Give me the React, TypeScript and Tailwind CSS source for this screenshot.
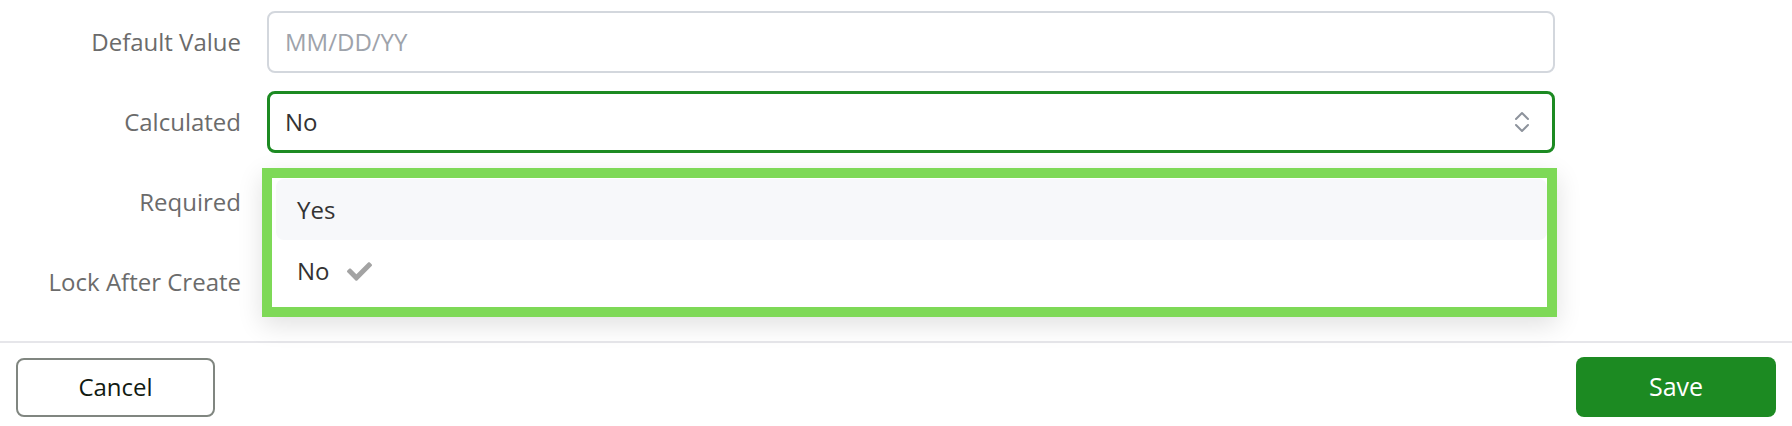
import { FaCheck } from 'react-icons/fa';

function FieldRow({ label, children }: { label: string; children?: React.ReactNode }) {
    return (
        <div className="grid grid-cols-[241px_1288px] gap-x-[26px] items-center h-[62px]">
            <span className="text-right text-[24px] text-[#6b6b6b] leading-none">{label}</span>
            <div>{children}</div>
        </div>
    );
}

function UpDown() {
    return (
        <svg width="16" height="24" viewBox="0 0 16 24" fill="none" stroke="#8d939c" strokeWidth="2" strokeLinecap="round" strokeLinejoin="round">
            <path d="M2 9 L8 3 L14 9" />
            <path d="M2 15 L8 21 L14 15" />
        </svg>
    );
}

export default function App() {
    return (
        <div className="relative w-[1792px] h-[426px] bg-white font-['Open_Sans',sans-serif] overflow-hidden">
            <div className="flex flex-col gap-[18px] pt-[11px]">
                <FieldRow label="Default Value">
                    <div className="h-[62px] rounded-[8px] border-2 border-[#d3d7dd] flex items-center px-[16px]">
                        <span className="text-[24px] text-[#9ea3ab]">MM/DD/YY</span>
                    </div>
                </FieldRow>
                <FieldRow label="Calculated">
                    <div className="h-[62px] rounded-[8px] border-[3px] border-[#1c8a22] flex items-center justify-between pl-[15px] pr-[22px]">
                        <span className="text-[24px] text-[#333333]">No</span>
                        <UpDown />
                    </div>
                </FieldRow>
                <FieldRow label="Required" />
                <FieldRow label="Lock After Create" />
            </div>

            <div className="mt-[28px] border-t-2 border-[#e6e6ea] flex items-center justify-between px-[16px] pt-[14px]">
                <button className="w-[199px] h-[59px] rounded-[8px] border-2 border-[#808680] bg-white text-[24px] text-[#111a11]">
                    Cancel
                </button>
                <button className="w-[200px] h-[60px] rounded-[8px] bg-[#1c8a22] text-[25px] text-white">
                    Save
                </button>
            </div>

            {/* open select menu */}
            <div className="absolute left-[262px] top-[168px] w-[1295px] h-[149px] border-[10px] border-[#7ed957] bg-white shadow-[0_8px_24px_rgba(0,0,0,0.12)]">
                <div className="pl-[4px] pt-[1px] flex flex-col">
                    <div className="h-[61px] rounded-[8px] bg-[#f7f8fa] flex items-center pl-[21px]">
                        <span className="text-[24px] text-[#333333]">Yes</span>
                    </div>
                    <div className="h-[62px] flex items-center pl-[21px] gap-[17px]">
                        <span className="text-[24px] text-[#333333]">No</span>
                        <FaCheck className="text-[#a3a3a3] w-[25px] h-[25px]" />
                    </div>
                </div>
            </div>
        </div>
    );
}
